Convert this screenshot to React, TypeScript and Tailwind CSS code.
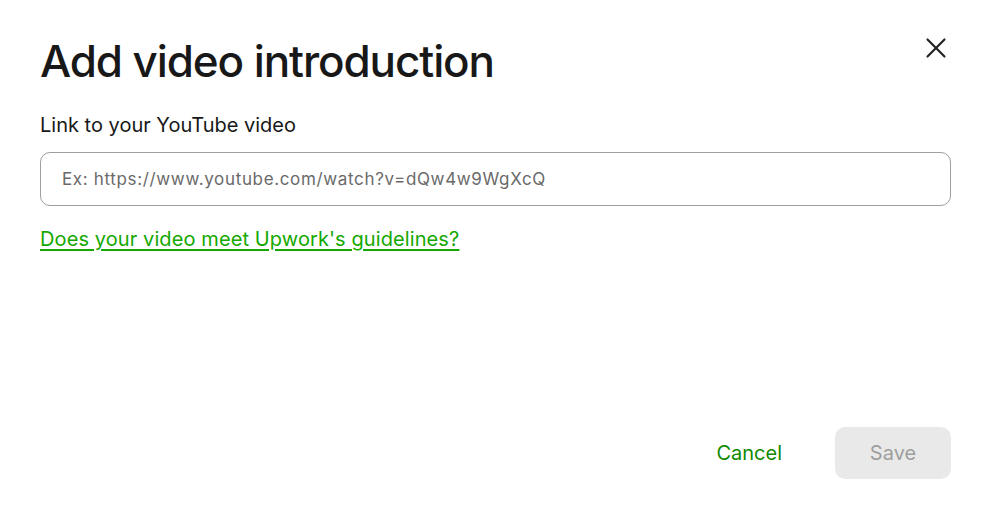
import { X } from "lucide-react"

export default function App() {
  return (
    <div className="flex h-[522px] w-[988px] flex-col bg-white pb-[43px] pl-10 pr-[37px] pt-[29px] font-['Inter',sans-serif] text-[#181818]">
      <div className="flex items-start justify-between">
        <h1 className="text-[44px] font-medium leading-[64px] tracking-[-0.025em]">
          Add video introduction
        </h1>
        <button className="mr-[-10px] mt-[-6px] p-2 text-[#222]">
          <X className="h-[34px] w-[34px]" strokeWidth={1.5} />
        </button>
      </div>

      <label className="mt-[18px] text-[20px] leading-[28px]">Link to your YouTube video</label>
      <input
        type="text"
        placeholder="Ex: https://www.youtube.com/watch?v=dQw4w9WgXcQ"
        className="mt-[13px] h-[54px] w-full rounded-[10px] border border-[#9e9e9e] px-[21px] text-[17px] tracking-[0.65px] placeholder:text-[#6a6a6a] outline-none"
      />

      <a href="#" className="mt-[19px] self-start text-[20px] leading-[28px] tracking-[0.1px] text-[#14a800] underline underline-offset-[3px]">
        Does your video meet Upwork's guidelines?
      </a>

      <div className="mt-auto flex items-center justify-end gap-[53px]">
        <button className="text-[20px] text-[#108a00]">Cancel</button>
        <button className="h-[52px] w-[116px] rounded-[10px] bg-[#e9e9e9] text-[20px] text-[#9e9e9e]">
          Save
        </button>
      </div>
    </div>
  )
}
